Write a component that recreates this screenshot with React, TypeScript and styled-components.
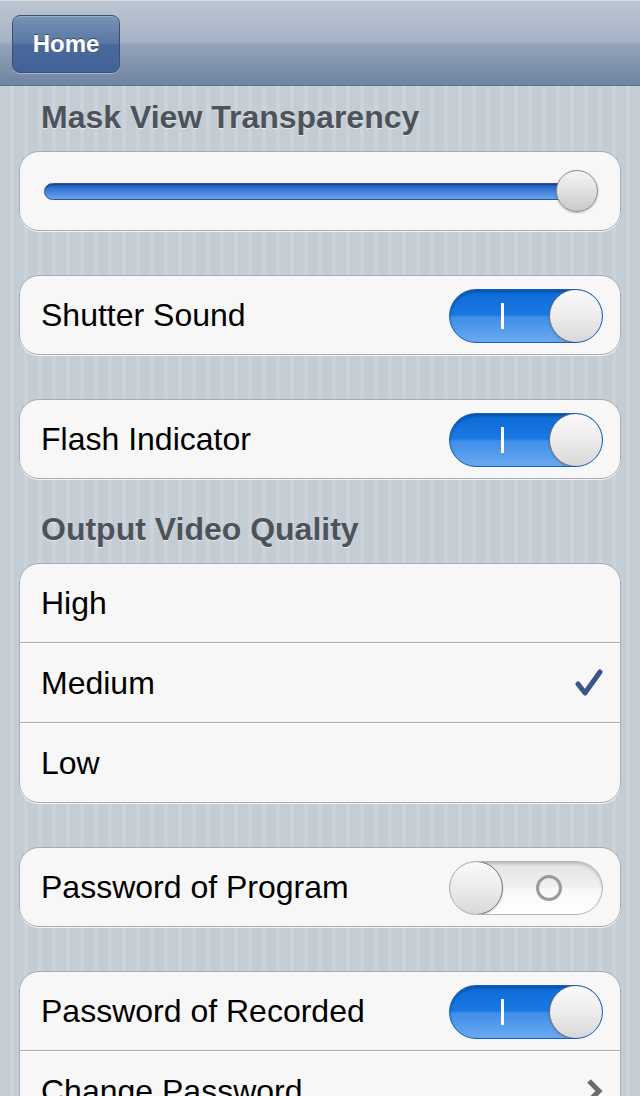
import React from "react";
import styled, { createGlobalStyle, css } from "styled-components";

const GlobalStyle = createGlobalStyle`
  html, body {
    margin: 0;
    padding: 0;
    height: 100%;
    overflow: hidden;
  }
  body {
    font-family: "Liberation Sans", Arial, sans-serif;
    background-color: #c4ccd4;
    background-image: repeating-linear-gradient(
      90deg,
      #c4ccd4 0px,
      #c4ccd4 10px,
      #ccd3da 10px,
      #ccd3da 14px
    );
  }
`;

const NavBar = styled.div`
  height: 86px;
  box-sizing: border-box;
  padding: 14px 12px;
  background: linear-gradient(
    to bottom,
    #bcc6d3 0%,
    #a6b3c5 48%,
    #93a4ba 52%,
    #6f84a2 100%
  );
  border-top: 1px solid #d6dde6;
  border-bottom: 1px solid #5d7190;
`;

const NavButton = styled.button`
  width: 108px;
  height: 58px;
  border-radius: 8px;
  border: 1px solid #3a5174;
  background: linear-gradient(
    to bottom,
    #7891b4 0%,
    #5a78a5 48%,
    #4a699a 52%,
    #42619a 100%
  );
  box-shadow: inset 0 1px 0 rgba(255, 255, 255, 0.25), 0 1px 0 rgba(255, 255, 255, 0.35);
  color: #fff;
  font-family: "Liberation Sans", Arial, sans-serif;
  font-weight: bold;
  font-size: 24px;
  text-shadow: 0 -1px 0 rgba(0, 0, 0, 0.45);
  padding: 0;
`;

const Content = styled.div`
  padding: 13px 19px 0;
`;

const SectionTitle = styled.div`
  font-size: 32px;
  line-height: 36px;
  font-weight: bold;
  color: #4d535b;
  text-shadow: 0 1px 0 rgba(255, 255, 255, 0.55);
  padding-left: 22px;
  margin-bottom: 16px;
`;

const Group = styled.div<{ $after: number }>`
  background: #f7f7f7;
  border: 1px solid #a9abae;
  border-radius: 20px;
  box-shadow: 0 1px 0 rgba(255, 255, 255, 0.75);
  margin-bottom: ${(p) => p.$after}px;
  overflow: hidden;
`;

const Row = styled.div`
  height: 78px;
  box-sizing: border-box;
  display: flex;
  align-items: center;
  justify-content: space-between;
  padding: 1px 17px 0 21px;

  & + & {
    height: 80px;
    border-top: 1px solid #aaacae;
    box-shadow: inset 0 1px 0 #ffffff;
  }
`;

const Label = styled.span`
  font-size: 32px;
  color: #000;
`;

const SliderRow = styled.div`
  height: 78px;
  display: flex;
  align-items: center;
  padding: 0 43px 0 24px;
`;

const Track = styled.div`
  flex: 1;
  position: relative;
  height: 17px;
  border-radius: 9px;
  border: 1px solid #2c5597;
  box-sizing: border-box;
  background: linear-gradient(to bottom, #1d58b8 0%, #3f7fda 45%, #6aa3ec 100%);
  box-shadow: inset 0 1px 1px rgba(0, 0, 0, 0.3);
`;

const Thumb = styled.div`
  position: absolute;
  right: -22px;
  top: 50%;
  width: 42px;
  height: 42px;
  margin-top: -21px;
  border-radius: 50%;
  box-sizing: border-box;
  border: 1px solid #8b8d90;
  background: linear-gradient(to bottom, #f4f4f4 0%, #dedede 55%, #c9c9c9 100%);
  box-shadow: 0 1px 2px rgba(0, 0, 0, 0.25);
`;

const SwitchBody = styled.div<{ $on: boolean }>`
  position: relative;
  width: 154px;
  height: 54px;
  border-radius: 27px;
  box-sizing: border-box;
  overflow: hidden;
  ${(p) =>
    p.$on
      ? css`
          border: 1px solid #1361bb;
          background: linear-gradient(
            to bottom,
            #0b6ad8 0%,
            #1b79e2 48%,
            #3f8ee8 52%,
            #6aa9f0 100%
          );
          box-shadow: inset 0 2px 3px rgba(0, 0, 0, 0.25);
        `
      : css`
          border: 1px solid #b5b5b5;
          background: linear-gradient(
            to bottom,
            #e4e4e4 0%,
            #f0f0f0 48%,
            #f8f8f8 52%,
            #ffffff 100%
          );
          box-shadow: inset 0 2px 3px rgba(0, 0, 0, 0.18);
        `}
`;

const Knob = styled.div<{ $on: boolean }>`
  position: absolute;
  top: -1px;
  ${(p) => (p.$on ? "right: -1px;" : "left: -1px;")}
  width: 54px;
  height: 54px;
  border-radius: 50%;
  box-sizing: border-box;
  border: 1px solid #6f7174;
  background: linear-gradient(to bottom, #fafafa 0%, #ececec 50%, #d8d8d8 100%);
  box-shadow: 0 1px 2px rgba(0, 0, 0, 0.2);
`;

const OnMark = styled.div`
  position: absolute;
  left: 51px;
  top: 13px;
  width: 3px;
  height: 26px;
  background: #fff;
`;

const OffMark = styled.div`
  position: absolute;
  left: 86px;
  top: 13px;
  width: 26px;
  height: 26px;
  border-radius: 50%;
  box-sizing: border-box;
  border: 3px solid #9a9a9a;
`;

const Switch: React.FC<{ on: boolean }> = ({ on }) => (
  <SwitchBody $on={on}>
    {on ? <OnMark /> : <OffMark />}
    <Knob $on={on} />
  </SwitchBody>
);

const Check = () => (
  <svg width="28" height="28" viewBox="0 0 28 28">
    <path
      d="M3 15 L10 24 L25 3"
      fill="none"
      stroke="#395689"
      strokeWidth="5"
      strokeLinecap="round"
      strokeLinejoin="round"
    />
  </svg>
);

const Chevron = () => (
  <svg width="18" height="26" viewBox="0 0 18 26">
    <path
      d="M4 3 L14 13 L4 23"
      fill="none"
      stroke="#6b6b6b"
      strokeWidth="5"
    />
  </svg>
);

const App: React.FC = () => {
  return (
    <>
      <GlobalStyle />
      <NavBar>
        <NavButton>Home</NavButton>
      </NavBar>
      <Content>
        <SectionTitle>Mask View Transparency</SectionTitle>
        <Group $after={44}>
          <SliderRow>
            <Track>
              <Thumb />
            </Track>
          </SliderRow>
        </Group>

        <Group $after={44}>
          <Row>
            <Label>Shutter Sound</Label>
            <Switch on />
          </Row>
        </Group>

        <Group $after={32}>
          <Row>
            <Label>Flash Indicator</Label>
            <Switch on />
          </Row>
        </Group>

        <SectionTitle>Output Video Quality</SectionTitle>
        <Group $after={44}>
          <Row>
            <Label>High</Label>
          </Row>
          <Row>
            <Label>Medium</Label>
            <Check />
          </Row>
          <Row>
            <Label>Low</Label>
          </Row>
        </Group>

        <Group $after={44}>
          <Row>
            <Label>Password of Program</Label>
            <Switch on={false} />
          </Row>
        </Group>

        <Group $after={0}>
          <Row>
            <Label>Password of Recorded</Label>
            <Switch on />
          </Row>
          <Row>
            <Label>Change Password</Label>
            <Chevron />
          </Row>
        </Group>
      </Content>
    </>
  );
};

export default App;
